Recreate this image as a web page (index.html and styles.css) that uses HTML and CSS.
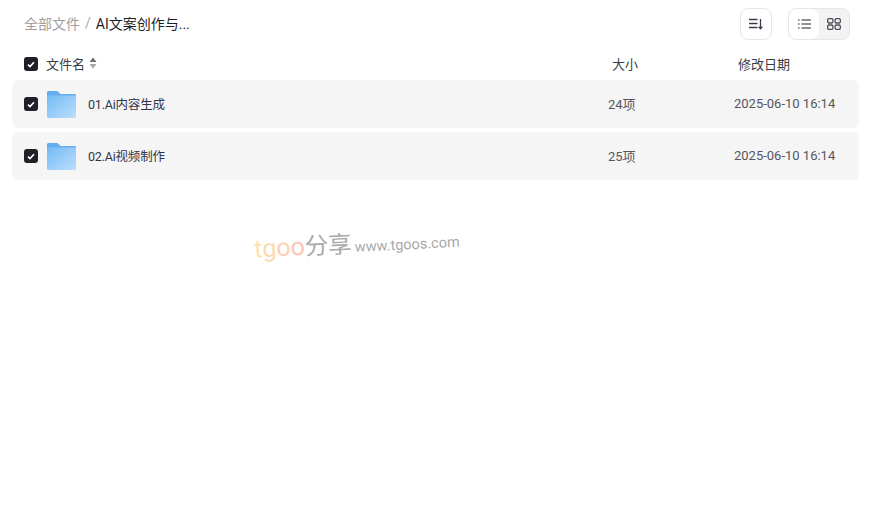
FILE: index.html
```html
<!DOCTYPE html>
<html lang="zh-CN">
<head>
  <meta charset="UTF-8">
  <meta name="viewport" content="width=device-width, initial-scale=1.0">
  <title>AI文案创作与...</title>
  <link rel="stylesheet" href="styles.css">
</head>
<body>
  <div class="toolbar">
    <div class="crumbs">
      <span class="crumb-root">全部文件</span>
      <span class="crumb-sep">/</span>
      <span class="crumb-current">AI文案创作与...</span>
    </div>
    <div class="tools">
      <button class="tool-btn" aria-label="排序">
        <svg width="14" height="12" viewBox="0 0 14 12" fill="none" stroke="#3c3f4a" stroke-width="1.3">
          <path d="M0 1.5h8.5M0 5.5h8.5M0 9.5h8.5"/>
          <path d="M11.5 1v9.5M9.7 8.7l1.8 2 1.8-2"/>
        </svg>
      </button>
      <div class="view-switch">
        <button class="view-btn view-active" aria-label="列表">
          <svg width="13" height="10" viewBox="0 0 13 10" fill="none" stroke="#25262f" stroke-width="1.2">
            <path d="M0 1h1.6M0 5h1.6M0 9h1.6M3.4 1H13M3.4 5H13M3.4 9H13"/>
          </svg>
        </button>
        <button class="view-btn" aria-label="网格">
          <svg width="14" height="12" viewBox="0 0 14 12" fill="none" stroke="#4a4d57" stroke-width="1.3">
            <rect x=".7" y=".7" width="5.2" height="4.3" rx="1.2"/>
            <rect x="8.1" y=".7" width="5.2" height="4.3" rx="1.2"/>
            <rect x=".7" y="7" width="5.2" height="4.3" rx="1.2"/>
            <rect x="8.1" y="7" width="5.2" height="4.3" rx="1.2"/>
          </svg>
        </button>
      </div>
    </div>
  </div>

  <div class="list-head">
    <div class="col-name">
      <span class="check"><svg width="8" height="7" viewBox="0 0 8 7" fill="none" stroke="#fff" stroke-width="1.6"><path d="M1 3.6l2 2 4-4.4"/></svg></span>
      <span class="label">文件名</span>
      <svg class="sort-arrows" width="8" height="12" viewBox="0 0 8 12">
        <path d="M4 .5l3.500 4.500H.5z" fill="#6f6f74"/>
        <path d="M4 11.500L.5 7h7z" fill="#a8a8ac"/>
      </svg>
    </div>
    <div class="col-size label">大小</div>
    <div class="col-date label">修改日期</div>
  </div>

  <div class="file-row">
    <div class="col-name">
      <span class="check"><svg width="8" height="7" viewBox="0 0 8 7" fill="none" stroke="#fff" stroke-width="1.6"><path d="M1 3.6l2 2 4-4.4"/></svg></span>
      <svg class="folder" width="30" height="28" viewBox="0 0 30 28">
        <defs>
          <linearGradient id="fold" x1="0" y1="0" x2="1" y2="1">
            <stop offset="0" stop-color="#74baf5"/>
            <stop offset="1" stop-color="#bcdefd"/>
          </linearGradient>
        </defs>
        <path d="M0 2.500C0 1.700 .7 1 1.500 1h8.300c.6 0 1.100.3 1.500.7L13.500 4H27.500c.8 0 1.500.7 1.500 1.500V8H0z" fill="#64aeef"/>
        <rect x="0" y="5.500" width="29" height="22.500" rx="1.500" fill="url(#fold)"/>
      </svg>
      <span class="file-name label">01.Ai内容生成</span>
    </div>
    <div class="col-size cell label">24项</div>
    <div class="col-date cell label">2025-06-10 16:14</div>
  </div>

  <div class="file-row">
    <div class="col-name">
      <span class="check"><svg width="8" height="7" viewBox="0 0 8 7" fill="none" stroke="#fff" stroke-width="1.6"><path d="M1 3.6l2 2 4-4.4"/></svg></span>
      <svg class="folder" width="30" height="28" viewBox="0 0 30 28">
        <path d="M0 2.500C0 1.700 .7 1 1.500 1h8.300c.6 0 1.100.3 1.500.7L13.500 4H27.500c.8 0 1.500.7 1.500 1.500V8H0z" fill="#64aeef"/>
        <rect x="0" y="5.500" width="29" height="22.500" rx="1.500" fill="url(#fold)"/>
      </svg>
      <span class="file-name label">02.Ai视频制作</span>
    </div>
    <div class="col-size cell label">25项</div>
    <div class="col-date cell label">2025-06-10 16:14</div>
  </div>

  <div class="watermark">
    <span class="wm-t">t</span><span class="wm-g">g</span><span class="wm-o1">o</span><span class="wm-o2">o</span><span class="wm-cn">分享</span>
    <span class="wm-url">www.tgoos.com</span>
  </div>
</body>
</html>
```

FILE: styles.css
```css
/* Page */
body {
  margin: 0;
  background: #fff;
  color: #33353f;
  font-family: Roboto, 'Noto Sans CJK SC', sans-serif;
  font-size: 13px;
  overflow: hidden;
}

/* Top bar */
.toolbar {
  display: flex;
  justify-content: space-between;
  align-items: center;
  height: 48px;
  padding: 0 24px;
}

.crumbs {
  display: flex;
  align-items: center;
  padding-bottom: 2px;
  font-size: 14px;
}

.crumb-root {
  color: #a09ea3;
}

.crumb-sep {
  color: #a9a9ad;
  margin: 0 5px;
}

.crumb-current {
  color: #1d1e26;
}

.tools {
  display: flex;
  gap: 16px;
}

.tool-btn {
  display: flex;
  justify-content: center;
  align-items: center;
  width: 32px;
  height: 32px;
  padding: 0;
  background: #fff;
  border: 1px solid #e6e6e8;
  border-radius: 8px;
}

.view-switch {
  display: flex;
  width: 62px;
  height: 32px;
  box-sizing: border-box;
  background: #f3f3f4;
  border: 1px solid #e6e6e8;
  border-radius: 8px;
  overflow: hidden;
}

.view-btn {
  display: flex;
  justify-content: center;
  align-items: center;
  flex: 1;
  padding: 0;
  background: transparent;
  border: none;
}

.view-active {
  background: #fff;
  border-radius: 8px;
}

/* List */
.list-head,
.file-row {
  display: grid;
  grid-template-columns: 1fr 126px 123px;
  align-items: center;
  margin: 0 15px 4px 12px;
  padding-left: 12px;
}

.list-head {
  height: 32px;
  margin-bottom: 0;
  color: #3a3c48;
}

.file-row {
  height: 48px;
  background: #f5f5f5;
  border-radius: 6px;
}

.label {
  padding-bottom: 2px;
}

.col-name {
  display: flex;
  align-items: center;
}

.check {
  display: flex;
  justify-content: center;
  align-items: center;
  width: 14px;
  height: 14px;
  margin-right: 8px;
  background: #1f2027;
  border-radius: 3px;
}

.folder {
  margin-left: 1px;
  margin-right: 11px;
}

.file-name {
  color: #33364a;
  font-size: 12.5px;
  letter-spacing: -0.2px;
}

.sort-arrows {
  margin-left: 4px;
  margin-bottom: 2px;
}

.list-head .col-size,
.list-head .col-date {
  margin-left: 2px;
}

.cell {
  margin-left: -2px;
  color: #55565c;
  white-space: nowrap;
}

/* Watermark lying over the page */
.watermark {
  position: absolute;
  left: 254px;
  top: 226px;
  display: flex;
  align-items: baseline;
  color: #a9a9a9;
  font-size: 25px;
  line-height: 36px;
  white-space: nowrap;
  transform: rotate(-3deg);
}

.wm-t {
  color: #fde3ae;
}

.wm-g {
  color: #fdd9ae;
}

.wm-o1 {
  color: #fdcfb0;
}

.wm-o2 {
  color: #fcc4b4;
}

.wm-cn {
  font-size: 23.5px;
}

.wm-url {
  margin-left: 3px;
  font-size: 14.5px;
}
```
